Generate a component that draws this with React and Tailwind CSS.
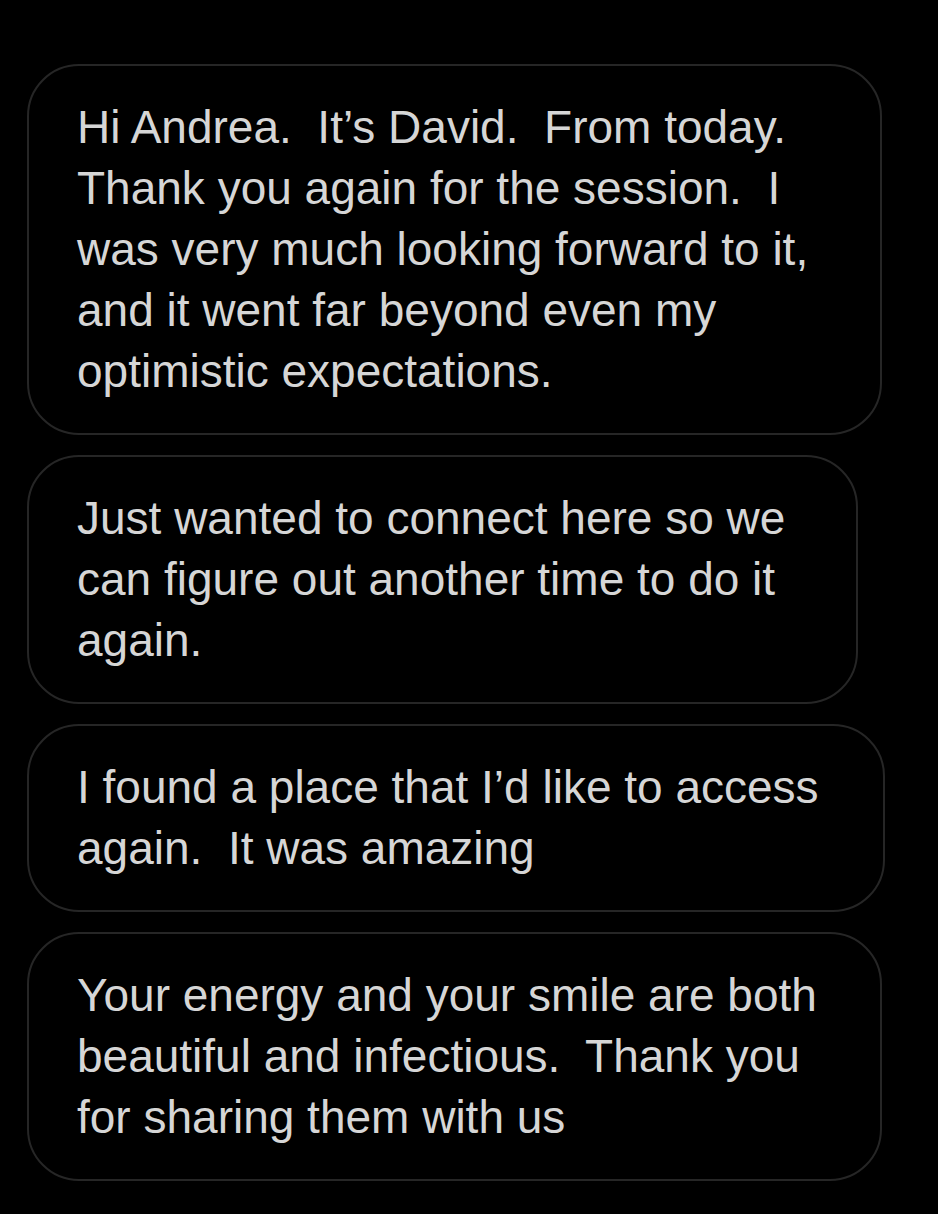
const MESSAGES = [
  {
    width: "w-[855px]",
    lines: [
      "Hi Andrea.  It’s David.  From today.",
      "Thank you again for the session.  I",
      "was very much looking forward to it,",
      "and it went far beyond even my",
      "optimistic expectations.",
    ],
  },
  {
    width: "w-[831px]",
    lines: [
      "Just wanted to connect here so we",
      "can figure out another time to do it",
      "again.",
    ],
  },
  {
    width: "w-[858px]",
    lines: ["I found a place that I’d like to access", "again.  It was amazing"],
  },
  {
    width: "w-[855px]",
    lines: [
      "Your energy and your smile are both",
      "beautiful and infectious.  Thank you",
      "for sharing them with us",
    ],
  },
];

function Bubble({ width, lines }) {
  return (
    <div
      className={`${width} rounded-[52px] border-2 border-[#262626] bg-black pl-[48px] py-[31px]`}
    >
      {lines.map((line, i) => (
        <div key={i} className="whitespace-pre leading-[61px]">
          {line}
        </div>
      ))}
    </div>
  );
}

export default function App() {
  return (
    <div
      className="min-h-[1214px] w-[938px] bg-black text-[#d6d6d6] text-[46px] overflow-hidden"
      style={{ fontFamily: '"Liberation Sans", Arial, sans-serif' }}
    >
      <div className="flex flex-col gap-[20px] pl-[27px] pt-[64px]">
        {MESSAGES.map((m, i) => (
          <Bubble key={i} width={m.width} lines={m.lines} />
        ))}
      </div>
    </div>
  );
}
